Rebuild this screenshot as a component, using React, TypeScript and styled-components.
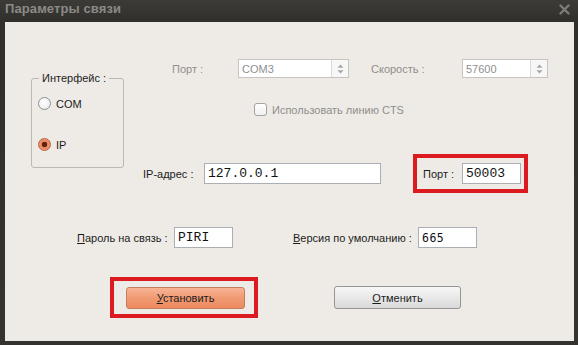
import React from "react";
import styled, { createGlobalStyle } from "styled-components";

const Global = createGlobalStyle`
  html, body { margin: 0; padding: 0; background: #33322e; }
  body { font-family: "Liberation Sans", Arial, sans-serif; }
`;

const Window = styled.div`
  width: 578px;
  height: 345px;
  display: flex;
  flex-direction: column;
  background: linear-gradient(#3c3b37, #302f2b 22px, #34332f);
`;

const TitleBar = styled.div`
  height: 22px;
  flex: none;
  display: flex;
  align-items: flex-start;
  justify-content: space-between;
  padding: 1px 8px 0 5px;
  box-sizing: border-box;
`;

const Title = styled.span`
  font: bold 13px "Liberation Sans", Arial, sans-serif;
  color: #8b8a86;
  letter-spacing: 0.1px;
`;

const CloseIcon = styled.svg`
  margin-top: 3px;
`;

const Panel = styled.div`
  flex: 1;
  margin: 0 4px 4px 5px;
  background: #eeebe6;
  display: flex;
  flex-direction: column;
  font-size: 11px;
  color: #1c1c1c;
`;

const TopSection = styled.div`
  display: flex;
  align-items: flex-start;
`;

const GroupFrame = styled.div`
  position: relative;
  margin: 56px 0 0 26px;
  width: 93px;
  height: 90px;
  box-sizing: border-box;
  border: 1px solid #bcb8b2;
  border-radius: 3px;
  padding: 18px 0 0 6px;
  display: flex;
  flex-direction: column;
  gap: 28px;
`;

const GroupLegend = styled.span`
  position: absolute;
  top: -8px;
  left: 7px;
  padding: 0 3px;
  background: #eeebe6;
  line-height: 14px;
`;

const RadioRow = styled.label`
  display: flex;
  align-items: center;
  gap: 5px;
  height: 13px;
`;

const RadioDot = styled.span<{ $checked?: boolean }>`
  width: 13px;
  height: 13px;
  box-sizing: border-box;
  border-radius: 50%;
  border: 1px solid ${(p) => (p.$checked ? "#b5603f" : "#8f8f8f")};
  background: ${(p) =>
    p.$checked
      ? "radial-gradient(circle at 50% 50%, #5e2410 0 2.5px, #e8835c 3px, #f09b78 6px)"
      : "radial-gradient(circle at 40% 40%, #ffffff, #e6e6e6)"};
`;

const RightCol = styled.div`
  margin-left: 19px;
  padding-top: 37px;
  display: flex;
  flex-direction: column;
`;

const TopRow = styled.div`
  display: flex;
  align-items: center;
  height: 19px;
  padding-left: 29px;
`;

const Label = styled.span<{ $w: number; $dim?: boolean; $ml?: number }>`
  width: ${(p) => p.$w}px;
  margin-left: ${(p) => p.$ml ?? 0}px;
  flex: none;
  color: ${(p) => (p.$dim ? "#8f8e8b" : "#1c1c1c")};
  white-space: nowrap;
`;

const Combo = styled.div<{ $w: number }>`
  width: ${(p) => p.$w}px;
  height: 19px;
  box-sizing: border-box;
  border: 1px solid #c6c4c0;
  background: #fff;
  display: flex;
  align-items: center;
  color: #8f8f8f;
`;

const ComboText = styled.span`
  flex: 1;
  padding-left: 3px;
`;

const Spin = styled.div`
  width: 16px;
  height: 100%;
  border-left: 1px solid #dcdad6;
  background: #f7f7f7;
  display: flex;
  align-items: center;
  justify-content: center;
`;

const CheckRow = styled.label`
  margin-top: 25px;
  padding-left: 111px;
  display: flex;
  align-items: center;
  gap: 5px;
  height: 13px;
  color: #8f8e8b;
`;

const CheckBox = styled.span`
  width: 13px;
  height: 13px;
  box-sizing: border-box;
  border: 1px solid #a3a3a3;
  border-radius: 3px;
  background: linear-gradient(#ffffff, #f0f0f0);
`;

const FieldRow = styled.div`
  margin-top: 38px;
  display: flex;
  align-items: center;
`;

const Input = styled.div<{ $w: number; $mono?: boolean }>`
  width: ${(p) => p.$w}px;
  height: 21px;
  flex: none;
  box-sizing: border-box;
  border: 1px solid #abaeb2;
  background: #fff;
  display: flex;
  align-items: center;
  padding-left: 3px;
  color: #111;
  font-family: ${(p) =>
    p.$mono ? '"Liberation Mono", "Courier New", monospace' : '"DejaVu Sans Mono", monospace'};
  font-size: ${(p) => (p.$mono ? "13px" : "11.5px")};
  letter-spacing: ${(p) => (p.$mono ? "0" : "0.5px")};
`;

const RedBox = styled.div<{ $ml: number; $pad: string }>`
  margin-left: ${(p) => p.$ml}px;
  border: 4px solid #dc1b21;
  padding: ${(p) => p.$pad};
  display: flex;
  align-items: center;
`;

const PassRow = styled.div`
  margin-top: 34px;
  padding-left: 72px;
  display: flex;
  align-items: center;
  height: 21px;
`;

const ButtonRow = styled.div`
  margin-top: 29px;
  padding-left: 105px;
  display: flex;
  align-items: center;
`;

const Button = styled.button<{ $primary?: boolean; $w: number; $h: number; $ml?: number }>`
  width: ${(p) => p.$w}px;
  height: ${(p) => p.$h}px;
  margin: 0 0 0 ${(p) => p.$ml ?? 0}px;
  padding: 0;
  box-sizing: border-box;
  border-radius: 3px;
  border: 1px solid ${(p) => (p.$primary ? "#c57d60" : "#959595")};
  background: ${(p) =>
    p.$primary
      ? "linear-gradient(#f8b496, #f19a72 50%, #ec8a5f)"
      : "linear-gradient(#f7f7f7, #e9e9e9 50%, #d9d9d9)"};
  font: 11px "Liberation Sans", Arial, sans-serif;
  color: #1c1c1c;
`;

const Arrows = () => (
  <svg width="7" height="10" viewBox="0 0 7 10">
    <path d="M3.5 0.5 L6.5 3.8 H0.5 Z" fill="#a6a6a6" />
    <path d="M3.5 9.5 L6.5 6.2 H0.5 Z" fill="#a6a6a6" />
  </svg>
);

export default function App() {
  return (
    <>
      <Global />
      <Window>
        <TitleBar>
          <Title>Параметры связи</Title>
          <CloseIcon width="11" height="11" viewBox="0 0 11 11">
            <path d="M1.5 1.5 L9.5 9.5 M9.5 1.5 L1.5 9.5" stroke="#7d7c78" strokeWidth="2.4" strokeLinecap="round" />
          </CloseIcon>
        </TitleBar>
        <Panel>
          <TopSection>
            <GroupFrame>
              <GroupLegend>Интерфейс :</GroupLegend>
              <RadioRow>
                <RadioDot />
                COM
              </RadioRow>
              <RadioRow>
                <RadioDot $checked />
                IP
              </RadioRow>
            </GroupFrame>
            <RightCol>
              <TopRow>
                <Label $w={66} $dim>
                  Порт :
                </Label>
                <Combo $w={111}>
                  <ComboText>COM3</ComboText>
                  <Spin>
                    <Arrows />
                  </Spin>
                </Combo>
                <Label $w={91} $dim $ml={22}>
                  Скорость :
                </Label>
                <Combo $w={86}>
                  <ComboText>57600</ComboText>
                  <Spin>
                    <Arrows />
                  </Spin>
                </Combo>
              </TopRow>
              <CheckRow>
                <CheckBox />
                Использовать линию CTS
              </CheckRow>
              <FieldRow>
                <Label $w={61}>IP-адрес :</Label>
                <Input $w={177} $mono>
                  127.0.0.1
                </Input>
                <RedBox $ml={32} $pad="5px 3px 5px 6px">
                  <Label $w={39}>Порт :</Label>
                  <Input $w={59} $mono>
                    50003
                  </Input>
                </RedBox>
              </FieldRow>
            </RightCol>
          </TopSection>
          <PassRow>
            <Label $w={97}>
              <u>П</u>ароль на связь :
            </Label>
            <Input $w={59} $mono>
              PIRI
            </Input>
            <Label $w={125} $ml={60}>
              <u>В</u>ерсия по умолчанию :
            </Label>
            <Input $w={59}>665</Input>
          </PassRow>
          <ButtonRow>
            <RedBox $ml={0} $pad="6px 9px 5px 12px">
              <Button $primary $w={119} $h={22}>
                <u>У</u>становить
              </Button>
            </RedBox>
            <Button $w={127} $h={23} $ml={76}>
              <u>О</u>тменить
            </Button>
          </ButtonRow>
        </Panel>
      </Window>
    </>
  );
}
